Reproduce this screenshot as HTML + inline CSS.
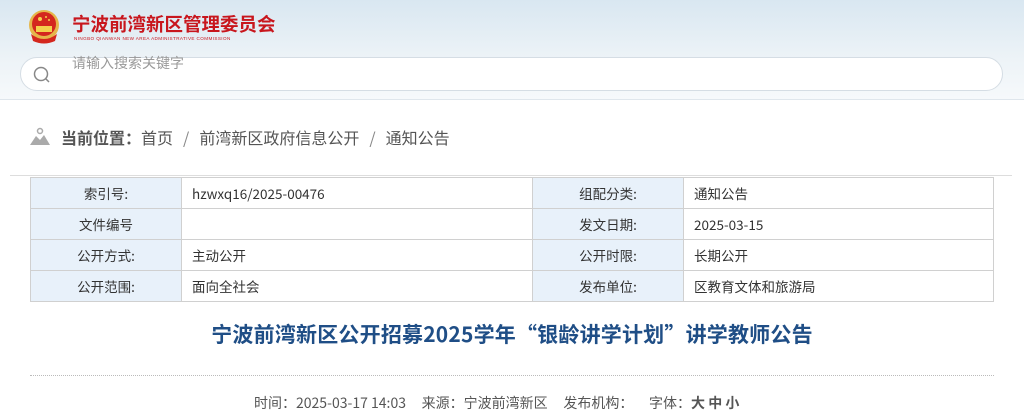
<!DOCTYPE html>
<html><head><meta charset="utf-8"><style>
*{margin:0;padding:0;box-sizing:border-box}
body{width:1024px;height:400px;overflow:hidden;background:#fff;font-family:"Liberation Sans","Noto Sans CJK SC",sans-serif;position:relative}
.hdr{position:absolute;left:0;top:0;width:1024px;height:100px;background:linear-gradient(180deg,#d9e7f1 0%,#edf3f7 60%,#f6f9fb 100%);border-bottom:1px solid #dfe6ec}
.t1{position:absolute;left:72px;top:11px;font-size:18.5px;font-weight:bold;color:#c8161d;letter-spacing:0;font-family:"Noto Sans CJK SC",sans-serif}
.t2{position:absolute;left:74px;top:36px;font-size:4.6px;color:#c8161d;letter-spacing:.4px;white-space:nowrap}
.srch{position:absolute;left:20px;top:57px;width:983px;height:34px;background:#fff;border:1px solid #d5dde4;border-radius:17px}
.ph{position:absolute;left:72px;top:53px;font-size:14px;color:#999;font-family:"Noto Sans CJK SC",sans-serif}
.bc{position:absolute;left:61px;top:125px;font-size:16px;color:#555;font-family:"Noto Sans CJK SC",sans-serif;white-space:nowrap}
.bc b{color:#555}
.bc span{margin:0 10px;color:#888}
.ln{position:absolute;left:10px;top:175px;width:1002px;height:1px;background:#ddd}
table{position:absolute;left:30px;top:177px;width:964px;border-collapse:collapse;font-size:13.5px;color:#333;font-family:"Noto Sans CJK SC",sans-serif}
td{border:1px solid #d0d0d0;height:31px;padding:0 10px}
td.l{background:#e8f1fa;text-align:center;width:151px}
td.v1{width:351px}
h1{position:absolute;left:0;width:1024px;top:319px;text-align:center;font-size:21px;color:#1f4e86;font-weight:bold;font-family:"Noto Sans CJK SC",sans-serif;letter-spacing:.2px}
.dot{position:absolute;left:30px;top:375px;width:964px;border-top:1px dotted #bbb}
.meta{position:absolute;left:254px;top:393px;font-size:14px;color:#555;white-space:nowrap;font-family:"Noto Sans CJK SC",sans-serif}
</style></head><body>
<div class="hdr"></div>
<svg style="position:absolute;left:25px;top:8px" width="38" height="38" viewBox="0 0 38 38">
<circle cx="19" cy="17" r="15" fill="#e6b64a"/><circle cx="19" cy="16" r="12" fill="#d4271e"/>
<circle cx="15" cy="11" r="2" fill="#f4d04c"/><circle cx="21" cy="9" r="1" fill="#f4d04c"/><circle cx="24" cy="12" r="1" fill="#f4d04c"/>
<rect x="11" y="18" width="16" height="6" fill="#f4d04c"/><path d="M6 26 Q19 36 32 26 L30 33 Q19 38 8 33Z" fill="#d4271e"/></svg>
<div class="t1">宁波前湾新区管理委员会</div>
<div class="t2">NINGBO QIANWAN NEW AREA ADMINISTRATIVE COMMISSION</div>
<div class="srch"></div>
<svg style="position:absolute;left:32px;top:65px" width="20" height="20" viewBox="0 0 20 20"><circle cx="9" cy="9" r="6.5" fill="none" stroke="#888" stroke-width="1.5"/><path d="M13.5 13.5L17 17" stroke="#888" stroke-width="1.5"/></svg>
<div class="ph">请输入搜索关键字</div>
<svg style="position:absolute;left:29px;top:127px" width="22" height="20" viewBox="0 0 22 20"><circle cx="11" cy="4" r="2.5" fill="none" stroke="#aaa" stroke-width="1.5"/><path d="M1 18 L7 9 L11 13 L15 8 L21 18Z" fill="#aaa"/></svg>
<div class="bc"><b>当前位置：</b>首页<span>/</span>前湾新区政府信息公开<span>/</span>通知公告</div>
<div class="ln"></div>
<table>
<tr><td class="l">索引号:</td><td class="v1">hzwxq16/2025-00476</td><td class="l">组配分类:</td><td>通知公告</td></tr>
<tr><td class="l">文件编号</td><td></td><td class="l">发文日期:</td><td>2025-03-15</td></tr>
<tr><td class="l">公开方式:</td><td>主动公开</td><td class="l">公开时限:</td><td>长期公开</td></tr>
<tr><td class="l">公开范围:</td><td>面向全社会</td><td class="l">发布单位:</td><td>区教育文体和旅游局</td></tr>
</table>
<h1>宁波前湾新区公开招募2025学年“银龄讲学计划”讲学教师公告</h1>
<div class="dot"></div>
<div class="meta">时间：2025-03-17 14:03 &nbsp;&nbsp;&nbsp; 来源：宁波前湾新区 &nbsp;&nbsp;&nbsp; 发布机构： &nbsp;&nbsp;&nbsp; 字体：<b>大 中 小</b></div>
</body></html>
